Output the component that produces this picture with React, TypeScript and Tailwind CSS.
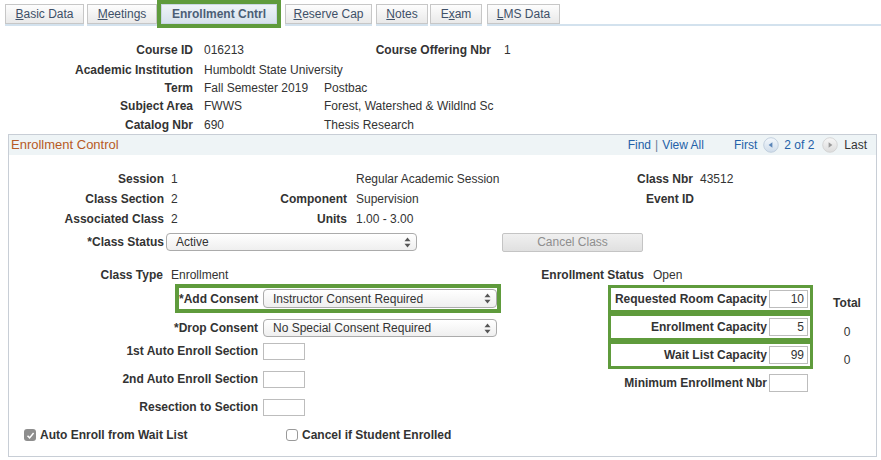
import React from "react";

const GREEN = "border-[#5f9b3c]";

function Tab({ label, u, w, mr }: { label: string; u: number; w: string; mr: string }) {
  return (
    <div className={`flex flex-col ${mr}`}>
      <div className="h-[4px]" />
      <div
        className={`${w} h-[20px] flex items-center justify-center border border-[#c7c7c7] bg-gradient-to-b from-[#fdfdfd] to-[#e9e9e9] text-[12px] text-[#3e5068]`}
      >
        <span>
          {label.slice(0, u)}
          <span className="underline">{label[u]}</span>
          {label.slice(u + 1)}
        </span>
      </div>
      <div className="h-[2px] bg-[#d3e2ee]" />
    </div>
  );
}

function Sel({ text, w, h }: { text: string; w: string; h: string }) {
  return (
    <div
      className={`${w} ${h} flex items-center justify-between rounded-[4px] border border-[#ababab] bg-gradient-to-b from-[#ffffff] to-[#efefef] pl-[9px] pr-[5px] text-[12px] text-[#333]`}
    >
      <span className="whitespace-nowrap">{text}</span>
      <svg width="7" height="11" viewBox="0 0 7 11">
        <path d="M3.5 0.5 L6.5 4.3 L0.5 4.3 Z" fill="#555" />
        <path d="M3.5 10.5 L6.5 6.7 L0.5 6.7 Z" fill="#555" />
      </svg>
    </div>
  );
}

function Inp({ v, w, h }: { v?: string; w: string; h: string }) {
  return (
    <div className={`${w} ${h} flex items-center justify-end border border-[#bdbdbd] bg-white pr-[3px] text-[12px] text-[#333]`}>
      {v}
    </div>
  );
}

function NavIcon({ dir }: { dir: "l" | "r" }) {
  return dir === "l" ? (
    <svg width="16" height="16" viewBox="0 0 16 16">
      <defs>
        <linearGradient id="gl" x1="0" y1="0" x2="0" y2="1">
          <stop offset="0" stopColor="#f4f8fc" />
          <stop offset="1" stopColor="#cfdcea" />
        </linearGradient>
      </defs>
      <circle cx="8" cy="8" r="7.3" fill="url(#gl)" stroke="#b9c8d8" strokeWidth="0.8" />
      <path d="M5.6 8 L9.4 5.2 L9.4 10.8 Z" fill="#5c86b8" />
    </svg>
  ) : (
    <svg width="16" height="16" viewBox="0 0 16 16">
      <defs>
        <linearGradient id="gr" x1="0" y1="0" x2="0" y2="1">
          <stop offset="0" stopColor="#f7f7f7" />
          <stop offset="1" stopColor="#dcdcdc" />
        </linearGradient>
      </defs>
      <circle cx="8" cy="8" r="7.3" fill="url(#gr)" stroke="#cfcfcf" strokeWidth="0.8" />
      <path d="M10.4 8 L6.6 5.2 L6.6 10.8 Z" fill="#9a9a9a" />
    </svg>
  );
}

export default function App() {
  return (
    <div className="w-[881px] h-[460px] overflow-hidden bg-white text-[12px] text-[#333] font-['Liberation_Sans',Arial,sans-serif]">
      {/* Tabs */}
      <div className="flex h-[28px] pl-[5px]">
        <Tab label="Basic Data" u={0} w="w-[79px]" mr="pr-[3px]" />
        <Tab label="Meetings" u={0} w="w-[70px]" mr="pr-[0px]" />
        <div className={`h-[28px] border-4 ${GREEN}`}>
          <div className="w-[116px] h-[20px] flex items-center justify-center border border-[#c9d6e3] bg-gradient-to-b from-[#eef3f8] to-[#d7e2ed] text-[12px] font-bold text-[#4b5e76]">
            Enrollment Cntrl
          </div>
        </div>
        <div className="w-[4px]" />
        <Tab label="Reserve Cap" u={0} w="w-[87px]" mr="pr-[4px]" />
        <Tab label="Notes" u={0} w="w-[52px]" mr="pr-[2px]" />
        <Tab label="Exam" u={1} w="w-[52px]" mr="pr-[5px]" />
        <Tab label="LMS Data" u={0} w="w-[73px]" mr="pr-[0px]" />
        <div className="flex flex-1 flex-col">
          <div className="h-[24px]" />
          <div className="h-[2px] bg-[#d3e2ee]" />
        </div>
      </div>

      {/* Header fields */}
      <div className="mt-[12px] flex flex-col">
        <div className="flex h-[20px] items-center">
          <div className="w-[193px] text-right font-bold">Course ID</div>
          <div className="ml-[11px] w-[120px]">016213</div>
          <div className="w-[167px] text-right font-bold">Course Offering Nbr</div>
          <div className="ml-[13px]">1</div>
        </div>
        <div className="flex h-[19px] items-center">
          <div className="w-[193px] text-right font-bold">Academic Institution</div>
          <div className="ml-[11px]">Humboldt State University</div>
        </div>
        <div className="flex h-[17px] items-center">
          <div className="w-[193px] text-right font-bold">Term</div>
          <div className="ml-[11px] w-[120px]">Fall Semester 2019</div>
          <div>Postbac</div>
        </div>
        <div className="flex h-[19px] items-center">
          <div className="w-[193px] text-right font-bold">Subject Area</div>
          <div className="ml-[11px] w-[120px]">FWWS</div>
          <div>Forest, Watershed &amp; Wildlnd Sc</div>
        </div>
        <div className="flex h-[19px] items-center">
          <div className="w-[193px] text-right font-bold">Catalog Nbr</div>
          <div className="ml-[11px] w-[120px]">690</div>
          <div>Thesis Research</div>
        </div>
      </div>

      {/* Panel */}
      <div className="ml-[8px] w-[869px] h-[323px] border border-[#c8ced6]">
        <div className="flex h-[20px] items-center bg-[#eef4f6] pl-[2px] pr-[9px]">
          <div className="text-[13px] text-[#b75a25]">Enrollment Control</div>
          <div className="ml-auto flex items-center">
            <span className="text-[#2461a8]">Find</span>
            <span className="mx-[4px] text-[#6a7f98]">|</span>
            <span className="text-[#2461a8]">View All</span>
            <span className="ml-[30px] text-[#2461a8]">First</span>
            <span className="ml-[6px] flex">
              <NavIcon dir="l" />
            </span>
            <span className="ml-[5px] text-[#2461a8]">2 of 2</span>
            <span className="ml-[8px] flex">
              <NavIcon dir="r" />
            </span>
            <span className="ml-[6px] text-[#333]">Last</span>
          </div>
        </div>

        {/* Upper section */}
        <div className="pt-[14px]">
          <div className="flex h-[20px] items-center">
            <div className="w-[155px] text-right font-bold">Session</div>
            <div className="ml-[7px] w-[70px]">1</div>
            <div className="w-[106px]" />
            <div className="ml-[9px] w-[239px]">Regular Academic Session</div>
            <div className="w-[98px] text-right font-bold">Class Nbr</div>
            <div className="ml-[7px]">43512</div>
          </div>
          <div className="flex h-[20px] items-center">
            <div className="w-[155px] text-right font-bold">Class Section</div>
            <div className="ml-[7px] w-[70px]">2</div>
            <div className="w-[106px] text-right font-bold">Component</div>
            <div className="ml-[9px] w-[239px]">Supervision</div>
            <div className="w-[99px] text-right font-bold">Event ID</div>
          </div>
          <div className="flex h-[20px] items-center">
            <div className="w-[155px] text-right font-bold">Associated Class</div>
            <div className="ml-[7px] w-[70px]">2</div>
            <div className="w-[106px] text-right font-bold">Units</div>
            <div className="ml-[9px] w-[239px]">1.00 - 3.00</div>
          </div>
          <div className="mt-[3px] flex h-[20px] items-center">
            <div className="w-[155px] text-right font-bold">*Class Status</div>
            <div className="ml-[2px]">
              <Sel text="Active" w="w-[251px]" h="h-[18px]" />
            </div>
            <div className="ml-[85px] flex h-[19px] w-[141px] items-center justify-center rounded-[2px] border border-[#c4c4c4] bg-gradient-to-b from-[#f0f0f0] to-[#e0e0e0] text-[#8e8e8e]">
              Cancel Class
            </div>
          </div>
        </div>

        {/* Lower section */}
        <div className="mt-[13px] flex">
          <div className="flex w-[496px] flex-col">
            <div className="flex h-[20px] items-center">
              <div className="w-[154px] text-right font-bold">Class Type</div>
              <div className="ml-[8px]">Enrollment</div>
            </div>
            <div className="-mt-[1px] pl-[166px]">
              <div className={`flex h-[29px] w-[326px] items-center border-4 ${GREEN}`}>
                <div className="w-[79px] whitespace-nowrap text-right font-bold">*Add Consent</div>
                <div className="ml-[5px]">
                  <Sel text="Instructor Consent Required" w="w-[234px]" h="h-[19px]" />
                </div>
              </div>
            </div>
            <div className="mt-[5px] flex h-[20px] items-center">
              <div className="w-[249px] text-right font-bold">*Drop Consent</div>
              <div className="ml-[5px]">
                <Sel text="No Special Consent Required" w="w-[234px]" h="h-[18px]" />
              </div>
            </div>
            <div className="mt-[3px] flex h-[20px] items-center">
              <div className="w-[249px] text-right font-bold">1st Auto Enroll Section</div>
              <div className="ml-[5px]">
                <Inp w="w-[42px]" h="h-[17px]" />
              </div>
            </div>
            <div className="mt-[8px] flex h-[20px] items-center">
              <div className="w-[249px] text-right font-bold">2nd Auto Enroll Section</div>
              <div className="ml-[5px]">
                <Inp w="w-[42px]" h="h-[17px]" />
              </div>
            </div>
            <div className="mt-[8px] flex h-[20px] items-center">
              <div className="w-[249px] text-right font-bold">Resection to Section</div>
              <div className="ml-[5px]">
                <Inp w="w-[42px]" h="h-[17px]" />
              </div>
            </div>
            <div className="mt-[8px] flex h-[20px] items-center pl-[15px]">
              <div className="flex w-[262px] items-center">
                <div className="flex h-[12px] w-[12px] items-center justify-center rounded-[3px] bg-[#8e8e8e]">
                  <svg width="9" height="9" viewBox="0 0 9 9">
                    <path d="M1.5 4.8 L3.6 6.9 L7.6 2" fill="none" stroke="#fff" strokeWidth="1.5" />
                  </svg>
                </div>
                <div className="ml-[4px] font-bold">Auto Enroll from Wait List</div>
              </div>
              <div className="flex items-center">
                <div className="h-[12px] w-[12px] rounded-[3px] border border-[#9a9a9a] bg-white" />
                <div className="ml-[4px] font-bold">Cancel if Student Enrolled</div>
              </div>
            </div>
          </div>

          <div className="flex flex-col">
            <div className="flex h-[20px] items-center">
              <div className="w-[139px] text-right font-bold">Enrollment Status</div>
              <div className="ml-[9px]">Open</div>
            </div>
            <div className="ml-[103px] flex h-[84px] items-start">
              <div className="flex w-[205px] flex-col gap-[6px] bg-[#5f9b3c] p-[3px]">
                {[
                  ["Requested Room Capacity", "10"],
                  ["Enrollment Capacity", "5"],
                  ["Wait List Capacity", "99"],
                ].map(([l, v]) => (
                  <div key={l} className="flex h-[22px] items-center bg-white pr-[2px]">
                    <div className="flex-1 whitespace-nowrap text-right font-bold">{l}</div>
                    <div className="ml-[2px]">
                      <Inp v={v} w="w-[39px]" h="h-[18px]" />
                    </div>
                  </div>
                ))}
              </div>
              <div className="ml-[20px] flex w-[28px] flex-col pt-[4px]">
                <div className="flex h-[28px] items-center justify-center font-bold">Total</div>
                <div className="flex h-[29px] items-center justify-center">0</div>
                <div className="flex h-[27px] items-center justify-center">0</div>
              </div>
            </div>
            <div className="ml-[103px] mt-[5px] flex h-[18px] w-[205px] items-center pr-[5px]">
              <div className="flex-1 whitespace-nowrap text-right font-bold">Minimum Enrollment Nbr</div>
              <div className="ml-[2px]">
                <Inp w="w-[39px]" h="h-[18px]" />
              </div>
            </div>
          </div>
        </div>
      </div>
    </div>
  );
}
